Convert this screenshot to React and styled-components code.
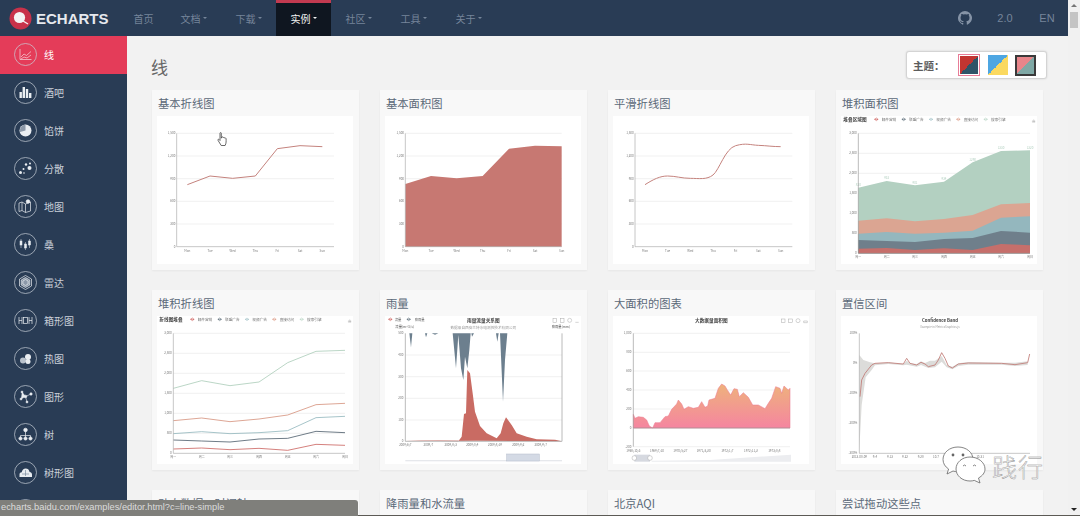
import React from "react";
import styled, { createGlobalStyle } from "styled-components";

const Global = createGlobalStyle`
  html, body { margin: 0; padding: 0; height: 516px; overflow: hidden; background: #f2f2f2; }
  * { box-sizing: border-box; }
  body { font-family: "Noto Sans CJK SC", "Liberation Sans", sans-serif; }
`;

const Frame = styled.div`position: relative; width: 1080px; height: 516px; overflow: hidden; display: flex; flex-direction: column;`;
const Top = styled.div`flex: 1; min-height: 0; display: flex;`;
const Page = styled.div`flex: 1; min-width: 0; display: flex; flex-direction: column;`;
const EdgeLine = styled.div`height: 1px; flex: none; background: #5c5a55;`;

const Header = styled.header`height: 36px; flex: none; background: #293c55; display: flex; align-items: stretch;`;
const Logo = styled.div`width: 121px; flex: none; display: flex; align-items: center; padding-left: 9px; gap: 4px;`;
const LogoText = styled.span`font: 700 15px "Liberation Sans", sans-serif; color: #e6e9ee; letter-spacing: 0;`;
const Nav = styled.nav`display: flex; flex: 1;`;
const NavItem = styled.div`
  width: ${p => (p.$plain ? "45px" : "55px")};
  display: flex; align-items: center; justify-content: center; gap: 1px;
  font-size: 10px; color: ${p => (p.$active ? "#f2f2f2" : "#76859a")};
  background: ${p => (p.$active ? "#0f1620" : "transparent")};
  border-top: 3px solid ${p => (p.$active ? "#c23a50" : "transparent")};
  padding-bottom: 3px;
`;
const Caret = styled.i`width: 0; height: 0; border: 2.5px solid transparent; border-top-color: currentColor; border-bottom: 0; margin-left: 1px;`;
const HeaderRight = styled.div`display: flex; align-items: center; color: #76859a; font: 11px "Liberation Sans", sans-serif;`;
const HeaderLink = styled.div`width: ${p => p.$w}px; display: flex; justify-content: center; align-items: center;`;

const Body = styled.div`flex: 1; min-height: 0; display: flex;`;
const Sidebar = styled.aside`width: 127px; flex: none; background: #293c55; overflow: hidden;`;
const SideItem = styled.div`
  height: 38px; display: flex; align-items: center; padding: 0 0 2px 14px; gap: 7px;
  font-size: 10px; color: ${p => (p.$active ? "#fff" : "#c9d0d9")};
  background: ${p => (p.$active ? "#e43c59" : "transparent")};
`;
const IconRing = styled.svg`width: 23px; height: 23px; flex: none; display: block;`;

const Main = styled.main`flex: 1; min-width: 0; overflow: hidden; background: #f2f2f2; padding: 0 21px 0 25px;`;
const TitleRow = styled.div`height: 54px; display: flex; justify-content: space-between; align-items: flex-start; padding-top: 15px;`;
const Heading = styled.h1`margin: 4px 0 0 -1px; font-size: 17px; line-height: 24px; font-weight: 400; color: #666;`;
const ThemeBox = styled.div`
  width: 141px; height: 28px; background: #fff; border: 1px solid #d4d4d4; border-radius: 3px;
  box-shadow: 0 0 2px rgba(0,0,0,.15); display: flex; align-items: center; padding-left: 6px;
`;
const ThemeLabel = styled.span`width: 45px; font-size: 10.5px; font-weight: 700; color: #5c5c5c;`;
const Swatch = styled.div`
  width: ${p => p.$size}px; height: ${p => p.$size}px; margin-right: ${p => p.$gap}px; flex: none;
  border: ${p => p.$border}; padding: ${p => p.$inset}px; background-clip: content-box;
  background-image: linear-gradient(135deg, ${p => p.$a} 0 50%, ${p => p.$b} 50% 100%);
`;

const Grid = styled.div`display: grid; grid-template-columns: repeat(4, 207px); column-gap: 21px; row-gap: 20px;`;
const Card = styled.section`position: relative; height: 180px; background: #f8f8f8; box-shadow: 0 1px 2px rgba(0,0,0,.05);`;
const CardTitle = styled.h3`margin: 0; height: 26px; padding-left: 6px; font-size: 11.3px; line-height: 26px; font-weight: 400; color: #5b6978;`;
const ChartBox = styled.div`width: 196px; height: 148px; margin-left: 5px; background: #fff;`;
const ChartSvg = styled.svg`display: block; width: 196px; height: 148px; filter: blur(0.35px);`;
const Cursor = styled.svg`position: absolute; left: 65px; top: 42px; width: 11px; height: 15px;`;

const Scrollbar = styled.div`width: 12px; flex: none; background: #f1f1f1; display: flex; flex-direction: column; align-items: center; padding-top: 4px;`;
const ArrowUp = styled.i`width: 0; height: 0; border: 3px solid transparent; border-bottom-color: #777; border-top: 0;`;
const Thumb = styled.div`width: 8px; height: 16px; margin-top: 5px; background: #c4c4c4; flex: none;`;
const ArrowDown = styled.i`width: 0; height: 0; margin-top: auto; margin-bottom: 4px; border: 3px solid transparent; border-top-color: #222; border-bottom: 0;`;

const StatusBar = styled.div`
  position: absolute; left: 0; bottom: 0; width: 358px; height: 16px; padding-left: 1px;
  background: #7f7f7b; border-top-right-radius: 3px; color: #dcdcdc;
  font: 9.3px/15px "Liberation Sans", sans-serif; white-space: nowrap;
`;
const Watermark = styled.div`position: absolute; left: 942px; top: 446px; display: flex; align-items: center; gap: 6px;`;
const WeChat = styled.svg`width: 44px; height: 38px; flex: none;`;
const WatermarkText = styled.span`
  font: 200 25px/30px "Noto Sans CJK SC", sans-serif; letter-spacing: 1px; color: #fff;
  -webkit-text-stroke: .4px #888; margin-top: 2px;
`;

const W = "#e9edf1";
const Ring = ({ children }) => (
  <IconRing viewBox="0 0 23 23">
    <circle cx="11.5" cy="11.5" r="11" fill="none" stroke="#c9d0d9" strokeWidth=".7" />
    {children}
  </IconRing>
);
const icons = {
  line: <g fill="none" stroke="#f7d5dc" strokeWidth=".7"><path d="M6 6v10.5h11.5" /><path d="M7 14l3-3 2.5 1.5L17 8.5" /><path d="M7 16l3-2 3 1 4-3" /></g>,
  bar: <g fill={W}><rect x="5.5" y="11" width="2.4" height="6" /><rect x="8.6" y="6" width="2.4" height="11" /><rect x="11.8" y="8" width="2.4" height="9" /><rect x="15" y="12" width="2.4" height="5" /></g>,
  pie: <g><circle cx="11.5" cy="11.5" r="6" fill={W} /><path d="M11.5 11.5V5.5A6 6 0 0 0 6 13z" fill="#8c98a8" /></g>,
  scatter: <g fill={W}><circle cx="6.5" cy="15.5" r="1.5" /><circle cx="9.5" cy="12" r="1" /><circle cx="12" cy="7.5" r="1.2" /><circle cx="15.5" cy="11" r="2" /><circle cx="16" cy="6.5" r="1" /><circle cx="10" cy="16" r=".8" /></g>,
  map: <g fill="none" stroke={W} strokeWidth=".7"><path d="M5 8l3-1 3.5 2 5-2v9l-5 1.5L8 15.5l-3 1z" /><path d="M11.5 9v8.5M8 7v8.5" /><circle cx="14" cy="6.5" r="1.8" fill={W} /></g>,
  candle: <g fill={W} stroke={W} strokeWidth=".5"><path d="M7 6v9M11.5 9v8M15.5 6v9" /><rect x="6" y="8" width="2" height="4" /><rect x="10.5" y="11" width="2" height="4" /><rect x="14.5" y="8" width="2" height="4" /></g>,
  radar: <g fill="none" stroke={W} strokeWidth=".7"><path d="M11.5 4.5l6 3.5v7l-6 3.5-6-3.5V8z" /><path d="M11.5 6.5l4.3 2.5v5l-4.3 2.5-4.3-2.5V9z" fill="#8c98a8" /><path d="M11.5 8.5l2.6 1.5v3l-2.6 1.5-2.6-1.5V10z" /></g>,
  box: <g fill="none" stroke={W} strokeWidth=".7"><path d="M5 8v7M8 8v7M5 11.5h3M15 8v7M18 8v7M15 11.5h3" /><rect x="9.500" y="8.500" width="4" height="6" /></g>,
  heat: <g fill={W}><circle cx="14" cy="10" r="3" /><circle cx="9" cy="13.5" r="3" fill="#b9c2cc" /><circle cx="14" cy="14.5" r="2.5" /></g>,
  graph: <g stroke={W} strokeWidth=".6" fill={W}><path d="M8 7l3.5 4.5L7 14M11.5 11.5L17 9M11.5 11.5l1.5 5.5" /><circle cx="8" cy="7" r="1" /><circle cx="11.5" cy="11.5" r="1.3" /><circle cx="7" cy="14" r="1" /><circle cx="17" cy="9" r="1.2" /><circle cx="13" cy="17" r="1" /></g>,
  tree: <g stroke={W} strokeWidth=".7" fill={W}><path d="M11.5 8v4M6.5 15v-2.5h10V15M11.5 12v3" fill="none" /><circle cx="11.5" cy="7" r="1.8" /><circle cx="6.5" cy="15.5" r="1.6" /><circle cx="11.5" cy="15.5" r="1.6" /><circle cx="16.5" cy="15.5" r="1.6" /></g>,
  treemap: <g fill={W}><path d="M5.5 16v-2.500c0-1.500 1-2.300 2.200-2.300.4-2.300 2-3.700 4-3.700s3.400 1.200 3.900 3.400c1.300 0 2.400 1 2.400 2.600V16z" /><path d="M8 13h7M11.500 9v6" stroke="#6c7d92" strokeWidth=".6" /></g>,
};

const sideItems = [
  ["线", "line"], ["酒吧", "bar"], ["馅饼", "pie"], ["分散", "scatter"], ["地图", "map"], ["桑", "candle"], ["雷达", "radar"],
  ["箱形图", "box"], ["热图", "heat"], ["图形", "graph"], ["树", "tree"], ["树形图", "treemap"], ["", "path"],
];

/* Chart drawings use coordinates of 3 units per screen pixel */
const T = ({ x, y, s = 9, c = "#777", a = "middle", w = 400, children }) => (
  <text x={x} y={y} fontSize={s} fill={c} textAnchor={a} fontWeight={w} fontFamily='"Noto Sans CJK SC","Liberation Sans",sans-serif'>{children}</text>
);
const Chart = ({ ox, children }) => (
  <ChartBox><ChartSvg viewBox={`${ox} 78 588 444`}>{children}</ChartSvg></ChartBox>
);
const pts = (xs, ys) => xs.map((x, i) => `${x},${ys[i]}`).join(" ");

const GridLines = ({ ys, x1, x2, labels, lx, stroke = "#eaeaea" }) => (
  <g>
    {ys.map((y, i) => (
      <g key={y}>
        <line x1={x1} x2={x2} y1={y} y2={y} stroke={stroke} strokeWidth="2" />
        {labels && <T x={lx} y={y + 3} a="end">{labels[i]}</T>}
      </g>
    ))}
  </g>
);
const Cats = ({ xs, y, labels }) => <g>{xs.map((x, i) => <T key={x} x={x} y={y}>{labels[i]}</T>)}</g>;
const days = ["Mon", "Tue", "Wed", "Thu", "Fri", "Sat", "Sun"];
const cnDays = ["周一", "周二", "周三", "周四", "周五", "周六", "周日"];
const lineLabels = ["1,500", "1,200", "900", "600", "300"];

const BasicAxes = ({ x, x2, xs }) => (
  <g>
    <GridLines ys={[130, 198, 266, 334, 402]} x1={x} x2={x2} labels={lineLabels} lx={x - 4} />
    <T x={x - 4} y={473} a="end">0</T>
    <Cats xs={xs} y={485} labels={days} />
  </g>
);
const AxisFrame = ({ x, x2 }) => <path d={`M${x} 130V470H${x2}`} fill="none" stroke="#aaa" strokeWidth="2" />;
const BasicLine = () => {
  const xs = [112, 180, 248, 316, 382, 450, 517];
  return (
    <Chart ox={21}>
      <BasicAxes x={80} x2={552} xs={xs} />
      <AxisFrame x={80} x2={552} />
      <polyline points={pts(xs, [284, 258, 265, 258, 176, 167, 170])} fill="none" stroke="#c4827d" strokeWidth="3" />
    </Chart>
  );
};
const BasicArea = () => {
  const xs = [76, 153, 230, 308, 387, 465, 545];
  return (
    <Chart ox={15}>
      <BasicAxes x={76} x2={545} xs={xs} />
      <polygon points={`76,470 ${pts(xs, [282, 258, 265, 258, 176, 167, 169])} 545,470`} fill="#c77872" />
      <AxisFrame x={76} x2={545} />
    </Chart>
  );
};
const SmoothLine = () => (
  <Chart ox={9}>
    <BasicAxes x={75} x2={547} xs={[105, 173, 241, 309, 377, 445, 512]} />
    <AxisFrame x={75} x2={547} />
    <path d="M105 284C130 268 150 258 173 258S215 265 241 265S290 270 309 255S345 176 377 167S420 165 445 166S490 170 512 170" fill="none" stroke="#c4827d" strokeWidth="3" />
  </Chart>
);

const legendNames = ["邮件营销", "联盟广告", "视频广告", "直接访问", "搜索引擎"];
const legendColors = ["#c23531", "#2f4554", "#8fb5bb", "#d48265", "#a9cbb8"];
const Legend = ({ title, ox }) => (
  <g>
    <T x={ox + 7} y={94} s={14} c="#444" a="start" w={700}>{title}</T>
    {legendNames.map((n, i) => {
      const x = ox + 100 + i * 82;
      return (
        <g key={n}>
          <path d={`M${x} 88h12M${x + 6} 84l5 4-5 4-5-4z`} fill="#fff" stroke={legendColors[i]} strokeWidth="1.4" />
          <T x={x + 22} y={92} s={11} c="#777" a="start">{n}</T>
        </g>
      );
    })}
    <path d={`M${ox + 574} 97h8v-5h-8zM${ox + 578} 87v7`} fill="#ccc" stroke="#bbb" strokeWidth="1" />
  </g>
);
const StackAxes = () => (
  <g>
    <GridLines ys={[130, 190, 250, 310, 370, 430]} x1={70} x2={585} labels={["3,000", "2,500", "2,000", "1,500", "1,000", "500"]} lx={65} />
    <T x={65} y={493} a="end">0</T>
    <Cats xs={[70, 155, 240, 327, 413, 498, 585]} y={505} labels={cnDays} />
  </g>
);
const stackXs = [70, 155, 240, 327, 413, 498, 585];
const StackArea = () => {
  const layers = [
    ["#b3d0c1", [293, 273, 286, 275, 217, 183, 181]],
    ["#dba592", [392, 385, 394, 387, 375, 343, 339]],
    ["#94b7be", [431, 426, 431, 428, 422, 383, 379]],
    ["#6f7f8b", [450, 453, 456, 447, 444, 423, 428]],
    ["#c66f6b", [476, 474, 480, 475, 480, 462, 466]],
  ];
  const tops = ["820", "932", "901", "934", "1290", "1330", "1320"];
  return (
    <Chart ox={18}>
      <Legend title="堆叠区域图" ox={18} />
      <StackAxes />
      {layers.map(([c, ys]) => <polygon key={c} points={`70,490 ${pts(stackXs, ys)} 585,490`} fill={c} />)}
      {tops.map((t, i) => <T key={t} x={stackXs[i]} y={layers[0][1][i] - 5} c="#b3d0c1" s={9}>{t}</T>)}
      <path d="M70 130V490H585" fill="none" stroke="#999" strokeWidth="2" />
    </Chart>
  );
};
const StackLine = () => {
  const layers = [
    ["#a9cbb8", [295, 272, 287, 276, 218, 184, 181]],
    ["#d48f7a", [392, 384, 395, 387, 375, 344, 340]],
    ["#8fb5bb", [431, 425, 431, 428, 422, 383, 379]],
    ["#4a5a68", [450, 453, 456, 447, 445, 424, 428]],
    ["#c9605c", [477, 474, 479, 475, 481, 463, 466]],
  ];
  return (
    <Chart ox={21}>
      <Legend title="折线图堆叠" ox={21} />
      <StackAxes />
      {layers.map(([c, ys]) => <polyline key={c} points={pts(stackXs, ys)} fill="none" stroke={c} strokeWidth="2.4" />)}
      <path d="M70 130V490H585" fill="none" stroke="#aaa" strokeWidth="2" />
    </Chart>
  );
};
const Rainfall = () => (
  <Chart ox={15}>
    <path d="M25 88h12M31 84l5 4-5 4-5-4z" fill="#fff" stroke="#c23531" strokeWidth="1.4" />
    <T x={44} y={92} s={10} c="#666" a="start">流量</T>
    <path d="M80 88h12M86 84l5 4-5 4-5-4z" fill="#fff" stroke="#2f4554" strokeWidth="1.4" />
    <T x={104} y={92} s={10} c="#666" a="start">降雨量</T>
    <T x={310} y={95} s={14} c="#444" w={700}>雨量流量关系图</T>
    <T x={310} y={116} s={11} c="#999">数据来自西安兰特水电测控技术有限公司</T>
    <T x={46} y={113} s={10} c="#555" a="start">流量(m^3/s)</T>
    <T x={515} y={113} s={10} c="#555" a="start">降雨量(mm)</T>
    <g fill="none" stroke="#aaa" strokeWidth="1.5">
      <rect x="519" y="86" width="11" height="11" /><rect x="541" y="86" width="11" height="11" /><circle cx="569" cy="91" r="6" /><path d="M586 97h10" />
    </g>
    <GridLines ys={[195, 260, 325, 390]} x1={76} x2={546} labels={["400", "300", "200", "100"]} lx={70} />
    <T x={70} y={133} a="end">500</T><T x={70} y={457} a="end">0</T>
    <polygon fill="#c96b63" points="76,451 120,452 235,454 245,440 252,372 258,370 262,240 270,250 278,310 285,365 300,408 320,430 350,445 362,430 370,400 378,382 395,405 410,430 440,440 470,448 525,449 546,454" />
    <g fill="#6c7f8e">
      <polygon points="88,130 93,172 97,130" /><polygon points="135,130 138,142 142,130" /><polygon points="155,130 165,134 175,130" />
      <polygon points="218,130 228,235 235,135 243,235 250,270 255,200 262,235 268,180 272,130" /><polygon points="274,130 276,140 282,130" />
      <polygon points="348,130 352,155 356,130" /><polygon points="360,130 369,335 375,210 382,130" />
    </g>
    <path d="M76 130V454H546V130" fill="none" stroke="#999" strokeWidth="2" />
    <Cats xs={[76, 145, 212, 277, 345, 415, 482]} y={468} labels={["2009/6/7", "2009/7", "2009/8/3", "2009/8/4", "2009/8/19", "2009/9/2", "2009/9/7"]} />
    <rect x="76" y="510" width="470" height="4" fill="#e6e8ec" />
    <rect x="380" y="492" width="98" height="21" fill="#d4dae5" stroke="#b5bdcc" strokeWidth="1.5" />
  </Chart>
);
const BigArea = () => (
  <Chart ox={9}>
    <defs>
      <linearGradient id="bigFill" x1="0" y1="0" x2="0" y2="1">
        <stop offset="0" stopColor="#eeb27c" /><stop offset="1" stopColor="#f585a0" />
      </linearGradient>
    </defs>
    <T x={304} y={95} s={14} c="#444" w={700}>大数据量面积图</T>
    <g fill="none" stroke="#aaa" strokeWidth="1.5">
      <rect x="514" y="87" width="11" height="11" /><rect x="536" y="87" width="11" height="11" /><circle cx="564" cy="92" r="6" /><path d="M581 98h11v-5h-11z" />
    </g>
    <GridLines ys={[130, 187, 243, 300, 357, 470]} x1={70} x2={540} labels={["1,000", "800", "600", "400", "200", "-200"]} lx={64} />
    <T x={64} y={417} a="end">0</T>
    <polygon fill="url(#bigFill)" stroke="#ec7a92" strokeWidth="1.6" points="70,414 70,373 75,385 85,380 100,382 110,390 118,408 128,414 135,398 150,398 165,380 175,378 185,358 200,342 205,330 215,342 222,358 235,350 250,355 265,352 275,335 285,352 293,348 297,330 315,325 325,295 335,282 345,288 352,300 362,315 372,296 382,298 388,320 400,308 415,322 428,345 445,345 465,356 475,340 485,325 497,290 510,295 515,310 522,288 535,300 540,295 540,414" />
    <path d="M70 130V470M70 414H540" fill="none" stroke="#999" strokeWidth="2" />
    <Cats xs={[70, 141, 211, 281, 352, 423, 493]} y={485} labels={["1968/10/3", "1969/7/10", "1970/5/27", "1971/3/20", "1972/1/7", "1972/11/2", "1973/8/8"]} />
    <polygon points="125,512 300,510 543,494 543,515 125,515" fill="#ecedf0" />
    <rect x="73" y="494" width="47" height="21" fill="#d6d9e0" />
    <circle cx="73" cy="504" r="7" fill="#fff" stroke="#aaa" strokeWidth="1.5" />
    <circle cx="120" cy="504" r="7" fill="#fff" stroke="#aaa" strokeWidth="1.5" />
  </Chart>
);
const Confidence = () => (
  <Chart ox={18}>
    <T x={315} y={95} s={13} c="#444" w={700}>Confidence Band</T>
    <T x={315} y={113} s={8.5} c="#999">Example in MetricsGraphics.js</T>
    {[["100%", 133], ["0%", 222], ["-100%", 313], ["-200%", 403], ["-300%", 493]].map(([t, y]) => <T key={t} x={67} y={y} a="end">{t}</T>)}
    <polygon fill="#dcdcda" points="73,195 85,210 105,217 120,220 160,217 205,222 215,212 225,220 245,222 258,214 270,219 285,212 300,212 320,198 335,225 352,230 370,220 400,216 500,218 540,218 578,214 578,225 540,228 500,224 400,224 370,228 352,238 335,232 320,215 300,232 280,234 258,225 245,230 215,224 205,226 160,222 120,226 110,240 92,262 80,345 73,480" />
    <polyline fill="none" stroke="#c17d78" strokeWidth="2.6" points="75,320 80,270 90,250 110,225 120,220 160,218 205,222 215,205 225,220 245,225 258,217 270,222 280,230 300,225 310,210 320,188 330,205 340,228 352,234 370,222 400,219 500,220 540,224 578,218 584,192" />
    <path d="M73 130V490H585" fill="none" stroke="#aaa" strokeWidth="2" />
    <Cats xs={[73, 120, 165, 210, 257, 303, 350, 390, 435]} y={505} labels={["2013-08-09", "9-4", "9-13", "9-22", "9-28", "10-7", "10-13", "10-19", "10-31"]} />
  </Chart>
);

const cards = [
  ["基本折线图", <BasicLine />], ["基本面积图", <BasicArea />], ["平滑折线图", <SmoothLine />], ["堆积面积图", <StackArea />],
  ["堆积折线图", <StackLine />], ["雨量", <Rainfall />], ["大面积的图表", <BigArea />], ["置信区间", <Confidence />],
  ["动态数据 + 时间轴", null], ["降雨量和水流量", null], ["北京AQI", null], ["尝试拖动这些点", null],
];

export default function App() {
  return (
    <Frame>
      <Global />
      <Top>
        <Page>
          <Header>
            <Logo>
              <svg width="23" height="23" viewBox="0 0 23 23">
                <circle cx="11.5" cy="11.5" r="11" fill="#c8324a" />
                <circle cx="10.5" cy="10.5" r="5.6" fill="#f4f4f4" />
                <path d="M14 14l5 3" stroke="#f4f4f4" strokeWidth="1.4" />
              </svg>
              <LogoText>ECHARTS</LogoText>
            </Logo>
            <Nav>
              <NavItem $plain>首页</NavItem>
              {["文档", "下载", "实例", "社区", "工具", "关于"].map(n => (
                <NavItem key={n} $active={n === "实例"}>{n}<Caret /></NavItem>
              ))}
            </Nav>
            <HeaderRight>
              <HeaderLink $w={39}>
                <svg width="14" height="14" viewBox="0 0 16 16" fill="#8593a6">
                  <path d="M8 0a8 8 0 0 0-2.53 15.59c.4.07.55-.17.55-.38v-1.49c-2.01.37-2.53-.49-2.69-.94-.09-.23-.48-.94-.82-1.13-.28-.15-.68-.52-.01-.53.63-.01 1.08.58 1.23.82.72 1.21 1.87.87 2.33.66.07-.52.28-.87.51-1.07-1.78-.2-3.64-.89-3.64-3.95 0-.87.31-1.59.82-2.15-.08-.2-.36-1.02.08-2.12 0 0 .67-.21 2.2.82a7.4 7.4 0 0 1 4 0c1.53-1.04 2.2-.82 2.2-.82.44 1.1.16 1.92.08 2.12.51.56.82 1.27.82 2.15 0 3.07-1.87 3.75-3.65 3.95.29.25.54.73.54 1.48v2.19c0 .21.15.46.55.38A8 8 0 0 0 8 0z" />
                </svg>
              </HeaderLink>
              <HeaderLink $w={42}>2.0</HeaderLink>
              <HeaderLink $w={42}>EN</HeaderLink>
            </HeaderRight>
          </Header>
          <Body>
            <Sidebar>
              {sideItems.map(([label, key], i) => (
                <SideItem key={key} $active={i === 0}>
                  <Ring>{icons[key]}</Ring>
                  {label}
                </SideItem>
              ))}
            </Sidebar>
            <Main>
              <TitleRow>
                <Heading>线</Heading>
                <ThemeBox>
                  <ThemeLabel>主题：</ThemeLabel>
                  <Swatch $size={22} $gap={8} $inset={1} $border="1px solid #e87d98" $a="#c23531" $b="#2f5468" />
                  <Swatch $size={20} $gap={7} $inset={0} $border="0" $a="#4ea6e2" $b="#fbd95f" />
                  <Swatch $size={21} $gap={0} $inset={0} $border="2px solid #3a3a3a" $a="#e8858a" $b="#7fa8a5" />
                </ThemeBox>
              </TitleRow>
              <Grid>
                {cards.map(([title, chart], i) => (
                  <Card key={title}>
                    <CardTitle>{title}</CardTitle>
                    {chart || <ChartBox />}
                    {i === 0 && (
                      <Cursor viewBox="0 0 11 15">
                        <path d="M3 1.2c0-.8 1.3-.8 1.3 0v5l.6-1.2c.8-.3 1.3 0 1.4.6.6-.4 1.3-.2 1.4.5.7-.3 1.4 0 1.4.8 0 2 .3 4.3-1 6.6H4.2L1 8.3c-.4-.8.5-1.4 1.1-.8L3 8.5z" fill="#fff" stroke="#444" strokeWidth=".8" />
                      </Cursor>
                    )}
                  </Card>
                ))}
              </Grid>
            </Main>
          </Body>
        </Page>
        <Scrollbar><ArrowUp /><Thumb /><ArrowDown /></Scrollbar>
      </Top>
      <EdgeLine />
      <StatusBar>echarts.baidu.com/examples/editor.html?c=line-simple</StatusBar>
      <Watermark>
        <WeChat viewBox="0 0 44 38">
          <path d="M16 1C7.500 1 1 6.500 1 13.500c0 4 2.200 7.300 5.600 9.500L5 28l6-3c1.600.5 3.200.7 5 .7C24.500 25.700 31 20.500 31 13.500S24.500 1 16 1z" fill="#fff" stroke="#666" strokeWidth=".8" />
          <circle cx="11" cy="9" r="1.400" fill="#666" /><circle cx="21" cy="9" r="1.400" fill="#666" />
          <path d="M28 11c-8 0-14 5.500-14 12s6 12 14 12c1.500 0 3-.2 4.300-.6L38 37l-1.500-5c4-2.200 6.500-5.300 6.500-9 0-6.500-6.700-12-15-12z" fill="#fff" stroke="#666" strokeWidth=".8" />
          <path d="M21 20q1.500-2 3 0M31 20q1.500-2 3 0" fill="none" stroke="#666" strokeWidth=".8" />
        </WeChat>
        <WatermarkText>践行</WatermarkText>
      </Watermark>
    </Frame>
  );
}
